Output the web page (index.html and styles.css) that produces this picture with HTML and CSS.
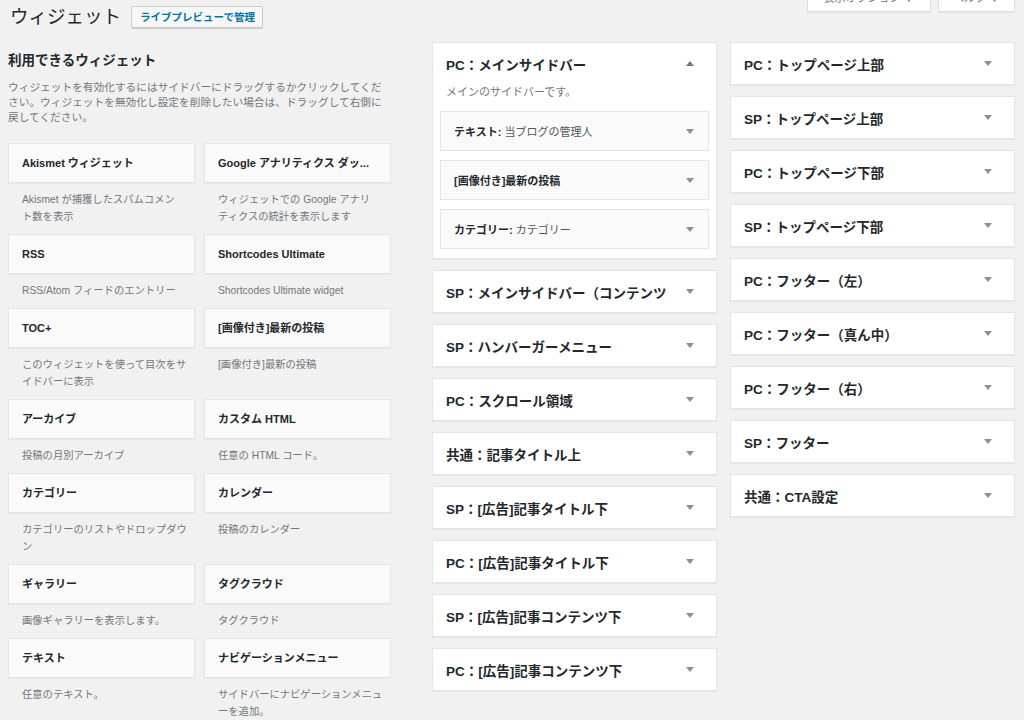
FILE: index.html
```html
<!DOCTYPE html>
<html lang="ja">
<head>
    <meta charset="UTF-8">
    <title>ウィジェット</title>
    <link rel="stylesheet" href="styles.css">
</head>
<body>
    <div class="wrap">
        <!-- ヘッダー -->
        <div class="page-head">
            <h1 class="page-title">ウィジェット</h1>
            <a class="title-action" href="#">ライブプレビューで管理</a>
            <div class="screen-tabs">
                <span class="screen-tab tab-options">表示オプション ▼</span>
                <span class="screen-tab tab-help">ヘルプ ▼</span>
            </div>
        </div>

        <div class="columns">
            <!-- 利用できるウィジェット -->
            <div class="available">
                <h2 class="available-title">利用できるウィジェット</h2>
                <p class="available-desc">ウィジェットを有効化するにはサイドバーにドラッグするかクリックしてくだ<br>さい。ウィジェットを無効化し設定を削除したい場合は、ドラッグして右側に<br>戻してください。</p>

                <div class="widget-grid">
                    <div class="widget">
                        <div class="widget-top">Akismet ウィジェット</div>
                        <div class="widget-desc">Akismet が捕獲したスパムコメン<br>ト数を表示</div>
                    </div>
                    <div class="widget">
                        <div class="widget-top">Google アナリティクス ダッ...</div>
                        <div class="widget-desc">ウィジェットでの Google アナリ<br>ティクスの統計を表示します</div>
                    </div>
                    <div class="widget">
                        <div class="widget-top">RSS</div>
                        <div class="widget-desc">RSS/Atom フィードのエントリー</div>
                    </div>
                    <div class="widget">
                        <div class="widget-top">Shortcodes Ultimate</div>
                        <div class="widget-desc">Shortcodes Ultimate widget</div>
                    </div>
                    <div class="widget">
                        <div class="widget-top">TOC+</div>
                        <div class="widget-desc">このウィジェットを使って目次をサ<br>イドバーに表示</div>
                    </div>
                    <div class="widget">
                        <div class="widget-top">[画像付き]最新の投稿</div>
                        <div class="widget-desc">[画像付き]最新の投稿</div>
                    </div>
                    <div class="widget">
                        <div class="widget-top">アーカイブ</div>
                        <div class="widget-desc">投稿の月別アーカイブ</div>
                    </div>
                    <div class="widget">
                        <div class="widget-top">カスタム HTML</div>
                        <div class="widget-desc">任意の HTML コード。</div>
                    </div>
                    <div class="widget">
                        <div class="widget-top">カテゴリー</div>
                        <div class="widget-desc">カテゴリーのリストやドロップダウ<br>ン</div>
                    </div>
                    <div class="widget">
                        <div class="widget-top">カレンダー</div>
                        <div class="widget-desc">投稿のカレンダー</div>
                    </div>
                    <div class="widget">
                        <div class="widget-top">ギャラリー</div>
                        <div class="widget-desc">画像ギャラリーを表示します。</div>
                    </div>
                    <div class="widget">
                        <div class="widget-top">タグクラウド</div>
                        <div class="widget-desc">タグクラウド</div>
                    </div>
                    <div class="widget">
                        <div class="widget-top">テキスト</div>
                        <div class="widget-desc">任意のテキスト。</div>
                    </div>
                    <div class="widget">
                        <div class="widget-top">ナビゲーションメニュー</div>
                        <div class="widget-desc">サイドバーにナビゲーションメニュ<br>ーを追加。</div>
                    </div>
                </div>
            </div>

            <!-- サイドバー（左列） -->
            <div class="sidebars">
                <div class="sidebar open">
                    <div class="sidebar-head">
                        <span class="sidebar-name">PC：メインサイドバー</span>
                        <span class="arrow up"></span>
                    </div>
                    <p class="sidebar-desc">メインのサイドバーです。</p>
                    <div class="sidebar-widgets">
                        <div class="in-widget">
                            <span class="in-name">テキスト: <span class="in-sub">当ブログの管理人</span></span>
                            <span class="arrow"></span>
                        </div>
                        <div class="in-widget">
                            <span class="in-name">[画像付き]最新の投稿</span>
                            <span class="arrow"></span>
                        </div>
                        <div class="in-widget">
                            <span class="in-name">カテゴリー: <span class="in-sub">カテゴリー</span></span>
                            <span class="arrow"></span>
                        </div>
                    </div>
                </div>
                <div class="sidebar"><div class="sidebar-head"><span class="sidebar-name">SP：メインサイドバー（コンテンツ</span><span class="arrow"></span></div></div>
                <div class="sidebar"><div class="sidebar-head"><span class="sidebar-name">SP：ハンバーガーメニュー</span><span class="arrow"></span></div></div>
                <div class="sidebar"><div class="sidebar-head"><span class="sidebar-name">PC：スクロール領域</span><span class="arrow"></span></div></div>
                <div class="sidebar"><div class="sidebar-head"><span class="sidebar-name">共通：記事タイトル上</span><span class="arrow"></span></div></div>
                <div class="sidebar"><div class="sidebar-head"><span class="sidebar-name">SP：[広告]記事タイトル下</span><span class="arrow"></span></div></div>
                <div class="sidebar"><div class="sidebar-head"><span class="sidebar-name">PC：[広告]記事タイトル下</span><span class="arrow"></span></div></div>
                <div class="sidebar"><div class="sidebar-head"><span class="sidebar-name">SP：[広告]記事コンテンツ下</span><span class="arrow"></span></div></div>
                <div class="sidebar"><div class="sidebar-head"><span class="sidebar-name">PC：[広告]記事コンテンツ下</span><span class="arrow"></span></div></div>
            </div>

            <!-- サイドバー（右列） -->
            <div class="sidebars right">
                <div class="sidebar"><div class="sidebar-head"><span class="sidebar-name">PC：トップページ上部</span><span class="arrow"></span></div></div>
                <div class="sidebar"><div class="sidebar-head"><span class="sidebar-name">SP：トップページ上部</span><span class="arrow"></span></div></div>
                <div class="sidebar"><div class="sidebar-head"><span class="sidebar-name">PC：トップページ下部</span><span class="arrow"></span></div></div>
                <div class="sidebar"><div class="sidebar-head"><span class="sidebar-name">SP：トップページ下部</span><span class="arrow"></span></div></div>
                <div class="sidebar"><div class="sidebar-head"><span class="sidebar-name">PC：フッター（左）</span><span class="arrow"></span></div></div>
                <div class="sidebar"><div class="sidebar-head"><span class="sidebar-name">PC：フッター（真ん中）</span><span class="arrow"></span></div></div>
                <div class="sidebar"><div class="sidebar-head"><span class="sidebar-name">PC：フッター（右）</span><span class="arrow"></span></div></div>
                <div class="sidebar"><div class="sidebar-head"><span class="sidebar-name">SP：フッター</span><span class="arrow"></span></div></div>
                <div class="sidebar"><div class="sidebar-head"><span class="sidebar-name">共通：CTA設定</span><span class="arrow"></span></div></div>
            </div>
        </div>
    </div>
</body>
</html>
```

FILE: styles.css
```css
* { margin: 0; padding: 0; box-sizing: border-box; }
html, body { overflow: hidden; }
body { background: #f1f1f1; color: #23282d; font-family: "Liberation Sans", "Noto Sans CJK JP", sans-serif; }
.wrap { padding: 0 9px 0 8px; }

/* ヘッダー */
.page-head { display: flex; align-items: center; height: 34px; padding-left: 2px; }
.page-title { font-size: 18.5px; font-weight: normal; line-height: 24px; color: #23282d; }
.title-action { margin-left: 10px; height: 22px; line-height: 20px; padding: 0 7px 0 8px; border: 1px solid #ccc; border-radius: 2px; background: #f7f7f7; color: #0073aa; font-size: 10.5px; font-weight: bold; text-decoration: none; box-shadow: 0 1px 0 #ccc; }
.screen-tabs { margin-left: auto; align-self: flex-start; display: flex; gap: 7px; margin-top: -16px; }
.screen-tab { display: block; height: 28px; line-height: 28px; background: #fff; border: 1px solid #ddd; border-top: 0; box-shadow: 0 1px 1px rgba(0,0,0,.04); color: #72777c; font-size: 11px; text-align: center; }
.tab-options { width: 124px; }
.tab-help { width: 77px; }

/* レイアウト */
.columns { display: flex; align-items: flex-start; margin-top: 8px; }
.available { width: 383px; }
.sidebars { width: 285px; margin-left: 41px; }
.sidebars.right { margin-left: 13px; }

/* 利用できるウィジェット */
.available-title { font-size: 13.5px; line-height: 20px; margin-top: 9px; }
.available-desc { font-size: 10.7px; line-height: 15px; color: #72777c; margin-top: 9px; white-space: nowrap; }
.widget-grid { display: grid; grid-template-columns: 1fr 1fr; column-gap: 9px; margin-top: 18px; }
.widget-top { height: 40px; line-height: 38px; padding: 0 13px; border: 1px solid #e5e5e5; background: #fafafa; font-size: 11px; font-weight: bold; box-shadow: 0 1px 1px rgba(0,0,0,.04); white-space: nowrap; overflow: hidden; }
.widget-desc { padding: 8px 4px 9px 14px; font-size: 10.3px; line-height: 17px; color: #72777c; white-space: nowrap; }

/* サイドバー */
.sidebar { background: #fff; border: 1px solid #e5e5e5; box-shadow: 0 1px 1px rgba(0,0,0,.04); margin-bottom: 11px; }
.sidebar-head { display: flex; align-items: center; height: 41px; padding: 0 22px 0 13px; }
.sidebar-name { flex: 1; font-size: 13.5px; font-weight: bold; white-space: nowrap; overflow: hidden; margin-right: 11px; }
.sidebar-desc { font-size: 11px; line-height: 16px; padding: 0 13px; color: #72777c; }
.sidebar-widgets { padding: 11px 7px 9px; }
.in-widget { display: flex; align-items: center; height: 40px; padding: 0 14px 0 13px; margin-bottom: 9px; border: 1px solid #e5e5e5; background: #fafafa; }
.in-widget:last-child { margin-bottom: 0; }
.in-name { flex: 1; font-size: 11px; font-weight: bold; white-space: nowrap; }
.in-sub { font-weight: normal; color: #50575e; }

.arrow { width: 0; height: 0; border-left: 4px solid transparent; border-right: 4px solid transparent; border-top: 5px solid #8c8f94; }
.arrow.up { border-top: 0; border-bottom: 5px solid #72777c; }
```
